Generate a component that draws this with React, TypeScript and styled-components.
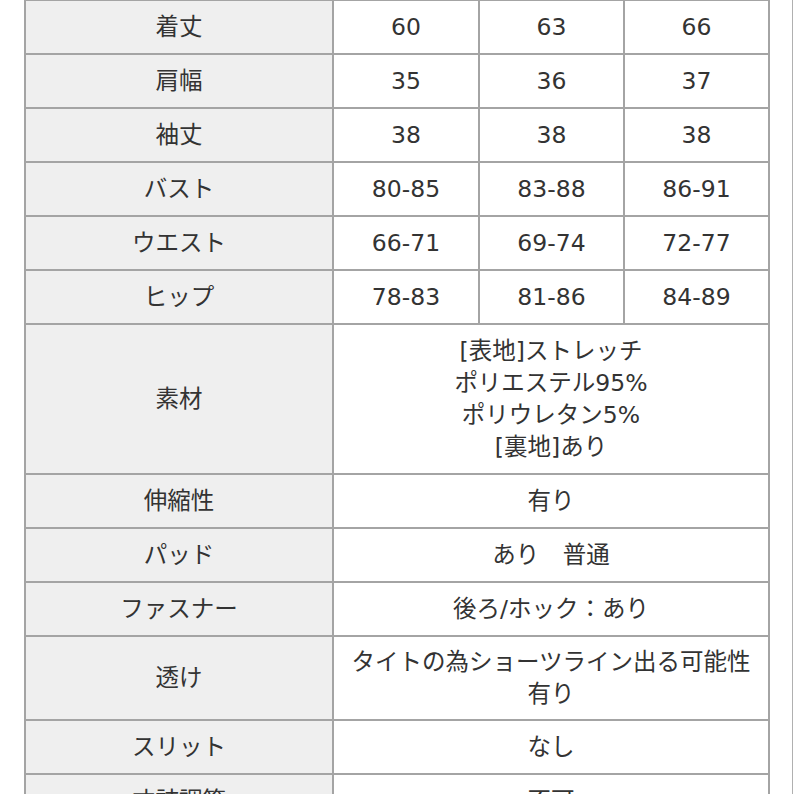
import { createGlobalStyle, styled } from "styled-components";

const GlobalStyle = createGlobalStyle`
  html, body {
    margin: 0;
    padding: 0;
    background: #ffffff;
  }
  body {
    font-family: "DejaVu Sans", "Noto Sans CJK JP", sans-serif;
    color: #333333;
  }
`;

interface SizeRow {
  label: string;
  values: string[];
}

interface DetailRow {
  label: string;
  lines: string[];
}

const sizeRows: SizeRow[] = [
  { label: "着丈", values: ["60", "63", "66"] },
  { label: "肩幅", values: ["35", "36", "37"] },
  { label: "袖丈", values: ["38", "38", "38"] },
  { label: "バスト", values: ["80-85", "83-88", "86-91"] },
  { label: "ウエスト", values: ["66-71", "69-74", "72-77"] },
  { label: "ヒップ", values: ["78-83", "81-86", "84-89"] },
];

const detailRows: DetailRow[] = [
  {
    label: "素材",
    lines: ["[表地]ストレッチ", "ポリエステル95%", "ポリウレタン5%", "[裏地]あり"],
  },
  { label: "伸縮性", lines: ["有り"] },
  { label: "パッド", lines: ["あり　普通"] },
  { label: "ファスナー", lines: ["後ろ/ホック：あり"] },
  { label: "透け", lines: ["タイトの為ショーツライン出る可能性", "有り"] },
  { label: "スリット", lines: ["なし"] },
  { label: "丈詰調節", lines: ["不可"] },
];

export default function App() {
  return (
    <>
      <GlobalStyle />
      <Page>
        <SpecTable>
          <colgroup>
            <Col $w={308} />
            <Col $w={146} />
            <Col $w={145} />
            <Col $w={145} />
          </colgroup>
          <tbody>
            {sizeRows.map((row) => (
              <tr key={row.label}>
                <LabelCell>{row.label}</LabelCell>
                {row.values.map((v, i) => (
                  <ValueCell key={i}>{v}</ValueCell>
                ))}
              </tr>
            ))}
            {detailRows.map((row) => (
              <tr key={row.label}>
                <LabelCell $lines={row.lines.length}>{row.label}</LabelCell>
                <ValueCell colSpan={3} $lines={row.lines.length}>
                  {row.lines.map((line, i) => (
                    <Line key={i}>{line}</Line>
                  ))}
                </ValueCell>
              </tr>
            ))}
          </tbody>
        </SpecTable>
      </Page>
    </>
  );
}

const Page = styled.div`
  width: 793px;
  height: 794px;
  overflow: hidden;
  padding-left: 24px;
  box-sizing: border-box;
  border-right: 1px solid #b0b0b0;
`;

const SpecTable = styled.table`
  width: 744px;
  margin-top: -1px;
  table-layout: fixed;
  border-collapse: collapse;
  border: 2px solid #a4a4a4;
  font-size: 23.5px;
`;

const Col = styled.col<{ $w: number }>`
  width: ${(p) => p.$w}px;
`;

const Cell = styled.td<{ $lines?: number }>`
  border: 2px solid #a4a4a4;
  height: ${(p) => (p.$lines && p.$lines > 2 ? 148 : p.$lines === 2 ? 82 : 52)}px;
  padding: 0;
  text-align: center;
  vertical-align: middle;
  line-height: 32px;
  color: #333333;
`;

const LabelCell = styled(Cell)`
  background: #efefef;
`;

const ValueCell = styled(Cell)`
  background: #ffffff;
`;

const Line = styled.div`
  white-space: nowrap;
`;
